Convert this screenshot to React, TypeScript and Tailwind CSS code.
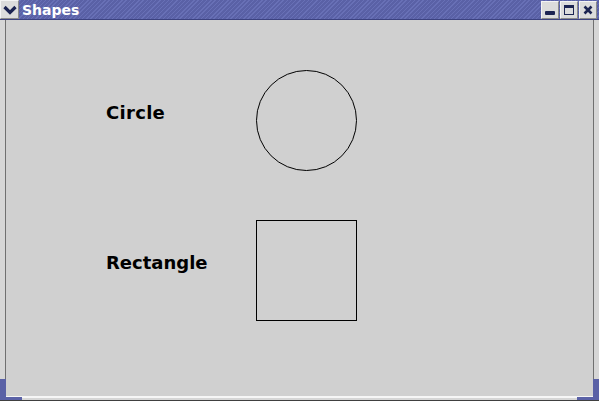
import React from "react";

const TitleButton = ({ children }: { children: React.ReactNode }) => (
    <div className="w-[18px] h-[18px] bg-[#dcdcdc] border border-[#f4f4f4] border-r-[#8a8a8a] border-b-[#8a8a8a] flex items-center justify-center">
        {children}
    </div>
);

const App = () => {
    return (
        <div className="w-[599px] h-[401px] bg-[#d0d0d0] flex flex-col overflow-hidden font-['DejaVu_Sans',sans-serif]">
            {/* Title bar */}
            <div className="h-[20px] flex items-center bg-[repeating-linear-gradient(135deg,#5a61a6_0px,#5a61a6_2px,#6870b6_2px,#6870b6_3px)] border-b border-[#3c4280]">
                {/* Window menu */}
                <div className="w-[19px] h-[19px] bg-[#dcdcdc] border border-[#f4f4f4] border-r-[#8a8a8a] border-b-[#8a8a8a] flex items-center justify-center">
                    <svg width="14" height="10" viewBox="0 0 14 10">
                        <path d="M1.5 2 L7 7.5 L12.5 2" fill="none" stroke="#1c2452" strokeWidth="3.2" />
                    </svg>
                </div>
                <span className="ml-[3px] text-white font-bold text-[14px] leading-none">Shapes</span>
                <div className="ml-auto flex gap-[1px] pr-[2px]">
                    <TitleButton>
                        <div className="w-[10px] h-[4px] bg-[#1c2452] mt-[6px] rounded-[1px]" />
                    </TitleButton>
                    <TitleButton>
                        <div className="w-[10px] h-[10px] border border-[#1c2452] border-t-[3px]" />
                    </TitleButton>
                    <TitleButton>
                        <svg width="10" height="10" viewBox="0 0 10 10">
                            <path d="M1.5 1.5 L8.5 8.5 M8.5 1.5 L1.5 8.5" stroke="#1c2452" strokeWidth="2.6" />
                        </svg>
                    </TitleButton>
                </div>
            </div>

            {/* Frame */}
            <div className="relative flex-1 flex bg-[#d6d6d6] px-[5px] pb-[3px]">
                <div className="flex-1 bg-[#d0d0d0] border-l border-[#707070] border-r border-r-[#707070] border-b-2 border-b-[#f6f6f6] flex flex-col pl-[100px] pt-[50px] gap-[49px]">
                    {/* Circle row */}
                    <div className="flex items-start h-[101px]">
                        <span className="w-[150px] mt-[32px] text-[18px] leading-[22px] font-bold tracking-[0.3px] text-black">Circle</span>
                        <svg width="101" height="101" viewBox="0 0 101 101">
                            <circle cx="50.5" cy="50.5" r="50" fill="none" stroke="#000" strokeWidth="1" />
                        </svg>
                    </div>
                    {/* Rectangle row */}
                    <div className="flex items-start h-[101px]">
                        <span className="w-[150px] mt-[32px] text-[18px] leading-[22px] font-bold text-black">Rectangle</span>
                        <div className="w-[101px] h-[101px] border border-black" />
                    </div>
                </div>
                {/* Blue resize corners */}
                <div className="absolute left-0 bottom-0 w-[22px] h-[22px] border-l-[6px] border-b-[4px] border-[#5a61a6]" />
                <div className="absolute right-0 bottom-0 w-[22px] h-[22px] border-r-[6px] border-b-[4px] border-[#5a61a6]" />
                <div className="absolute left-0 right-0 bottom-0 h-px bg-[#404040]" />
            </div>
        </div>
    );
};

export default App;
